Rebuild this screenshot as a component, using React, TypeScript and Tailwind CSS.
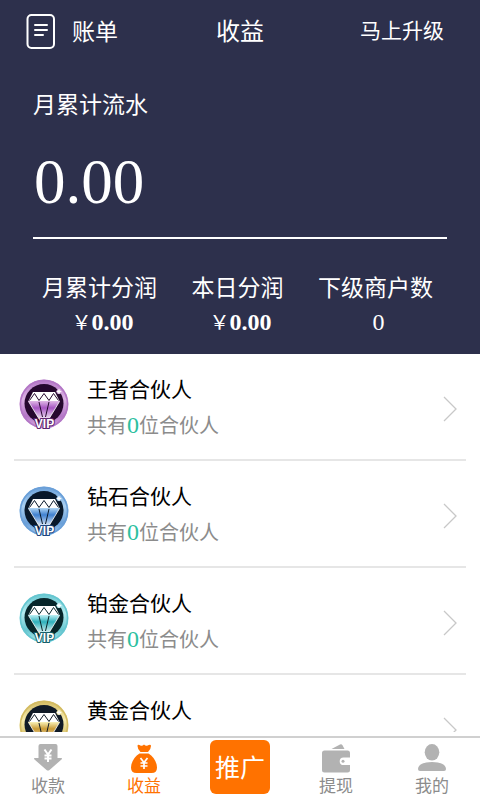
import React from "react";

type Tone = { id: string; light: string; mid: string; deep: string; dark: string; edge: string };
type Tier = { name: string; count: number; tone: Tone };

const tiers: Tier[] = [
  { name: "王者合伙人", count: 0, tone: { id: "king", light: "#dcb2e4", mid: "#b377c6", deep: "#a656c2", dark: "#25082e", edge: "#5c2470" } },
  { name: "钻石合伙人", count: 0, tone: { id: "diamond", light: "#a9d0f2", mid: "#6a9fd8", deep: "#3f80d0", dark: "#08182b", edge: "#1c4680" } },
  { name: "铂金合伙人", count: 0, tone: { id: "platinum", light: "#b4ecf0", mid: "#66c6d0", deep: "#2fb0bb", dark: "#07262a", edge: "#14606a" } },
  { name: "黄金合伙人", count: 0, tone: { id: "gold", light: "#f6ebae", mid: "#d3bb62", deep: "#c99a35", dark: "#101a26", edge: "#6b4d14" } },
];

function VipBadge({ tone }: { tone: Tone }) {
  const ring = `ring-${tone.id}`;
  const gem = `gem-${tone.id}`;
  return (
    <svg viewBox="0 0 50 50" className="mb-1.5 size-[50px] shrink-0 overflow-visible" aria-hidden="true">
      <defs>
        <linearGradient id={ring} x1="0" y1="0" x2="0" y2="1">
          <stop offset="0" stopColor={tone.mid} />
          <stop offset="0.4" stopColor={tone.light} />
          <stop offset="0.75" stopColor={tone.mid} />
          <stop offset="1" stopColor={tone.light} />
        </linearGradient>
        <linearGradient id={gem} x1="0" y1="0" x2="0" y2="1">
          <stop offset="0" stopColor={tone.light} />
          <stop offset="0.3" stopColor={tone.deep} />
          <stop offset="0.9" stopColor="#ffffff" />
        </linearGradient>
      </defs>
      <circle cx="25" cy="25" r="24.5" fill={`url(#${ring})`} />
      <circle cx="25" cy="25" r="23.500" fill="none" stroke={tone.mid} strokeWidth="1.500" />
      <circle cx="25" cy="24.5" r="19.5" fill={tone.dark} />
      <path d="M9.500 22.500h31L27.500 44h-5z" fill={`url(#${gem})`} stroke="#fff" strokeWidth="0.800" />
      <path d="M14 13h22l4.500 9h-31z" fill="#fff" />
      <path d="M10.500 21.500l5-7 4.500 7 5-7 5 7 4.500-7 5 7" fill="none" stroke={tone.dark} strokeWidth="1" />
      <path d="M20 23l3.500 15M30 23l-3.500 15" fill="none" stroke={tone.dark} strokeWidth="1" />
      <path d="M9.500 22.500h31" stroke={tone.light} strokeWidth="1" />
      <circle cx="40" cy="12.500" r="2.500" fill={tone.light} />
      <path d="M40 9.500l.8 2.200 2.200.8-2.200.8-.8 2.200-.8-2.200-2.200-.8 2.200-.8z" fill="#fff" />
      <text x="25.500" y="49" textAnchor="middle" fontFamily="Liberation Sans, sans-serif" fontWeight="700" fontSize="12" fill="#fff" stroke={tone.edge} strokeWidth="2" paintOrder="stroke">VIP</text>
    </svg>
  );
}

function BillIcon() {
  return (
    <svg viewBox="0 0 30 36" className="mt-1 h-9 w-[30px]" fill="none" stroke="currentColor" strokeLinecap="round" aria-hidden="true">
      <rect x="1.500" y="1" width="26.500" height="33" rx="4" strokeWidth="2" />
      <path d="M9 11h12M9 16h12M9 21h8" strokeWidth="2" />
    </svg>
  );
}

function Chevron() {
  return (
    <svg viewBox="0 0 14 26" className="mt-1 h-[26px] w-3.5 shrink-0" fill="none" stroke="#c8c8c8" strokeWidth="1.300" aria-hidden="true">
      <path d="M1 1l12 12L1 25" />
    </svg>
  );
}

function CollectIcon() {
  return (
    <svg viewBox="0 0 28 28" className="size-7" aria-hidden="true">
      <path d="M6.500 0h15a2 2 0 0 1 2 2v12h4q1 0 0 1.500L15.500 26q-1.500 1.200-3 0L.500 15.500q-1-1.500 0-1.500h4V2a2 2 0 0 1 2-2z" fill="#b2b2b2" />
      <path d="M10.500 5.500l3.500 5 3.500-5M14 10.500V18M10.500 11.500h7M10.500 14.500h7" fill="none" stroke="#fff" strokeWidth="2" />
    </svg>
  );
}

function BagIcon() {
  return (
    <svg viewBox="0 0 28 30" className="h-[30px] w-7" aria-hidden="true">
      <path d="M7.500 2q0-2 2.500-.8Q12 2.500 14 .5q2 2 4 .7 3-1.200 3 .8 0 3-3 6H10.500q-3-3-3-6z" fill="#ff7200" />
      <path d="M9.500 9.500h9c5 3 8.500 9 8.500 14q0 5.500-5.500 5.500h-15Q1 29 1 23.500c0-5 3.500-11 8.500-14z" fill="#ff7200" />
      <path d="M10.500 14l3.500 4.500 3.500-4.500M14 18.500V25M10.500 19h7M10.500 22h7" fill="none" stroke="#fff" strokeWidth="1.700" />
    </svg>
  );
}

function WalletIcon() {
  return (
    <svg viewBox="0 0 28 29" className="h-[29px] w-7" fill="#b2b2b2" aria-hidden="true">
      <path d="M9.500 5L18 .5q1.500-.8 2.500.7L22.500 5z" />
      <path d="M2.500 6.500h23q2.500 0 2.500 2.500v4.500h-6.500a3.800 3.800 0 0 0 0 7.600H28V26q0 2.500-2.500 2.500h-23Q0 28.500 0 26V9q0-2.500 2.500-2.500z" />
      <circle cx="21" cy="17.300" r="1.500" />
    </svg>
  );
}

function PersonIcon() {
  return (
    <svg viewBox="0 0 28 28" className="size-7" fill="#b2b2b2" aria-hidden="true">
      <ellipse cx="14" cy="8.300" rx="7.300" ry="8.300" />
      <path d="M0 25c0-4.500 6-7 14-7s14 2.500 14 7q0 2-2 2H2q-2 0-2-2z" />
    </svg>
  );
}

function Stat({ label, children }: { label: string; children: React.ReactNode }) {
  return (
    <div className="flex flex-col items-center">
      <dt className="text-[23px] leading-8">{label}</dt>
      <dd className="flex h-10 items-center pl-1.5 font-['Liberation_Serif',serif] text-2xl">{children}</dd>
    </div>
  );
}

function Money({ value }: { value: string }) {
  return (
    <>
      <span className="font-['Noto_Sans_CJK_SC',sans-serif] text-xl">￥</span>
      <b>{value}</b>
    </>
  );
}

function NavItem({ label, icon, active = false }: { label: string; icon: React.ReactNode; active?: boolean }) {
  return (
    <a href="#" aria-current={active ? "page" : undefined} className={`flex flex-col items-center pt-1.5 text-[17px] leading-5 ${active ? "text-[#ff7200]" : "text-[#8c8c8c]"}`}>
      <span className="flex h-[31px] items-start">{icon}</span>
      {label}
    </a>
  );
}

export default function App() {
  return (
    <div className="flex h-screen flex-col bg-white font-['Noto_Sans_CJK_SC',sans-serif]">
      <header className="shrink-0 bg-[#2d304c] pb-3 text-white">
        <div className="grid h-[60px] grid-cols-[1fr_auto_1fr] items-center px-[26px]">
          <button type="button" className="flex items-center gap-4 justify-self-start text-[23px]">
            <BillIcon />
            账单
          </button>
          <h1 className="text-2xl">收益</h1>
          <button type="button" className="justify-self-end pr-2.5 text-[21px]">马上升级</button>
        </div>
        <section className="px-[33px]">
          <h2 className="pt-[27px] text-[23px] leading-8">月累计流水</h2>
          <p className="flex h-[120px] items-center border-b-2 border-white pt-2 pl-px font-['Liberation_Serif',serif] text-[63px] leading-none">0.00</p>
          <dl className="mt-[31px] flex justify-between pr-3.5 pl-[9px]">
            <Stat label="月累计分润"><Money value="0.00" /></Stat>
            <Stat label="本日分润"><Money value="0.00" /></Stat>
            <Stat label="下级商户数">0</Stat>
          </dl>
        </section>
      </header>
      <main className="mb-1 min-h-0 flex-1 overflow-y-auto [scrollbar-width:none]">
        <ul className="px-3.5">
          {tiers.map((tier) => (
            <li key={tier.name} className="border-b-2 border-[#e6e6e6]">
              <a href="#" className="flex h-[105px] items-center pr-[9px] pl-[5px]">
                <VipBadge tone={tier.tone} />
                <span className="ml-[18px] flex flex-1 flex-col gap-0.5">
                  <span className="text-[21px] leading-[34px] text-black">{tier.name}</span>
                  <span className="text-xl leading-9 text-[#8c8c8c]">
                    共有<span className="font-['Liberation_Serif',serif] text-2xl text-[#2dbfa0]">{tier.count}</span>位合伙人
                  </span>
                </span>
                <Chevron />
              </a>
            </li>
          ))}
        </ul>
      </main>
      <nav className="grid h-16 shrink-0 grid-cols-5 border-t-2 border-[#d0d0d0] bg-white">
        <NavItem label="收款" icon={<CollectIcon />} />
        <NavItem label="收益" icon={<BagIcon />} active />
        <div className="flex justify-center pt-0.5">
          <button type="button" className="h-[54px] w-[60px] rounded-md bg-[#ff7200] text-[25px] text-white">推广</button>
        </div>
        <NavItem label="提现" icon={<WalletIcon />} />
        <NavItem label="我的" icon={<PersonIcon />} />
      </nav>
    </div>
  );
}
